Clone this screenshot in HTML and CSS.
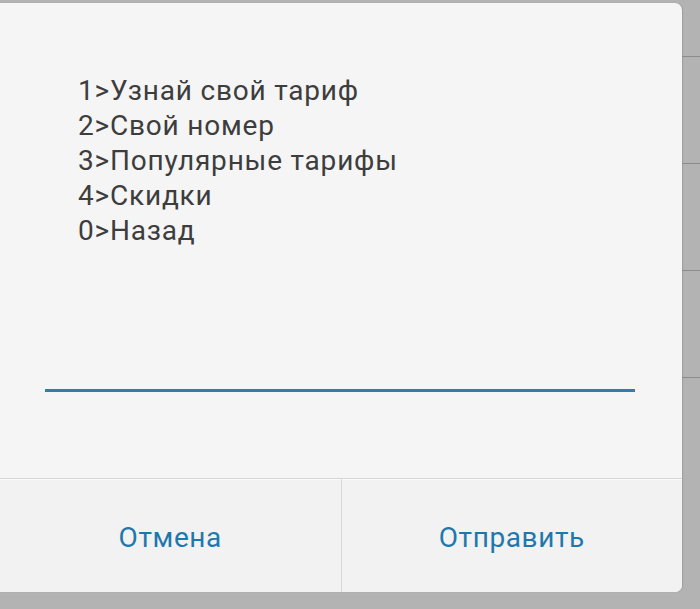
FILE: index.html
```html
<!DOCTYPE html>
<html lang="ru">
<head>
<meta charset="utf-8">
<link rel="stylesheet" href="styles.css">
</head>
<body>
<div class="screen">
  <div class="dialog">
    <div class="content">
      <div class="message">
        <div>1&gt;Узнай свой тариф</div>
        <div>2&gt;Свой номер</div>
        <div>3&gt;Популярные тарифы</div>
        <div>4&gt;Скидки</div>
        <div>0&gt;Назад</div>
      </div>
      <div class="input"></div>
    </div>
    <div class="buttons">
      <div class="btn">Отмена</div>
      <div class="btn">Отправить</div>
    </div>
  </div>
  <div class="strip">
    <div class="cell first"></div>
    <div class="cell"></div>
    <div class="cell"></div>
    <div class="cell"></div>
    <div class="cell"></div>
  </div>
</div>
</body>
</html>
```

FILE: styles.css
```css
html, body {
  margin: 0;
  padding: 0;
  background: #b3b3b3;
  font-family: Roboto, "Noto Sans", sans-serif;
}
.screen {
  display: flex;
  width: 700px;
  height: 609px;
  overflow: hidden;
}
.dialog {
  margin-top: 3px;
  width: 682px;
  height: 589px;
  flex: none;
  background: #f5f5f5;
  border-radius: 0 7px 7px 0;
  display: flex;
  flex-direction: column;
  overflow: hidden;
  box-shadow: 1px 0 1px rgba(0,0,0,0.12);
}
.content {
  height: 475px;
  box-sizing: border-box;
  padding: 70px 0 0 78px;
  display: flex;
  flex-direction: column;
}
.message {
  font-size: 28px;
  line-height: 35px;
  letter-spacing: 0.8px;
  color: #3d3d3d;
}
.input {
  margin: 141px 0 0 -33px;
  width: 590px;
  height: 3px;
  background: #2f7eb0;
}
.buttons {
  flex: 1;
  display: flex;
  background: #f2f2f2;
  border-top: 1px solid #d6d6d6;
  box-shadow: inset 0 1px 0 #fbfbfb;
}
.btn {
  flex: 1;
  display: flex;
  align-items: center;
  justify-content: center;
  font-size: 28px;
  letter-spacing: 0.6px;
  color: #1f78ad;
  padding-top: 3px;
}
.btn + .btn {
  border-left: 1px solid #d8d8d8;
}
.strip {
  flex: 1;
  display: flex;
  flex-direction: column;
}
.cell {
  height: 106px;
  flex: none;
  border-top: 1px solid #8c8c8c;
}
.cell.first {
  height: 56px;
  border-top: none;
}
```
